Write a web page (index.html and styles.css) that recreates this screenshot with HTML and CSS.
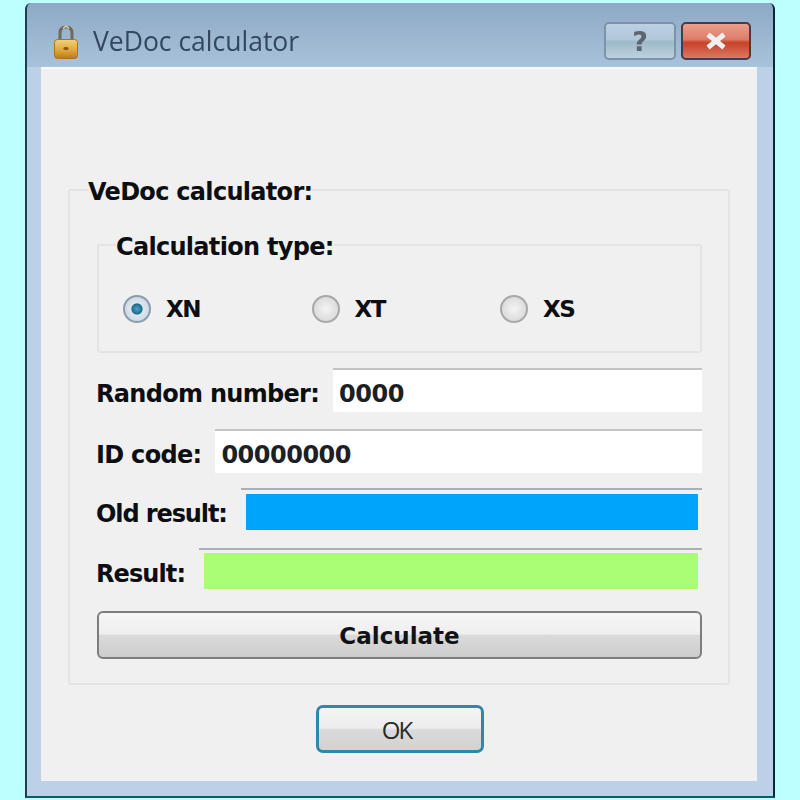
FILE: index.html
```html
<!DOCTYPE html>
<html lang="en">
<head>
    <meta charset="UTF-8">
    <title>VeDoc calculator</title>
    <link rel="stylesheet" href="styles.css">
</head>
<body>

    <div class="window">
        <!-- Title bar -->
        <div class="titlebar">
            <svg class="lock" width="26" height="35" viewBox="0 0 26 35">
                <defs>
                    <linearGradient id="lockBody" x1="0" y1="0" x2="0" y2="1">
                        <stop offset="0" stop-color="#f3d27a"/>
                        <stop offset="0.55" stop-color="#e0a93c"/>
                        <stop offset="1" stop-color="#b67a22"/>
                    </linearGradient>
                </defs>
                <path d="M7 17V9C7 5 9 3 13 3s6 2 6 6v8" fill="none" stroke="#6f6a5c" stroke-width="3"/>
                <path d="M10 4.500 13 2l3 2.500" fill="none" stroke="#d8d4c4" stroke-width="1.500"/>
                <rect x="1.500" y="15.500" width="23" height="19" rx="3" fill="url(#lockBody)" stroke="#a9741f"/>
                <rect x="10.500" y="23" width="5" height="3" rx="1.500" fill="#8a5a18"/>
            </svg>
            <span class="title">VeDoc calculator</span>
            <div class="caption-btns">
                <div class="cap-btn help">?</div>
                <div class="cap-btn close">
                    <svg width="26" height="18" viewBox="0 0 26 18">
                        <path d="M5 2.500 21 15.500M21 2.500 5 15.500" stroke="#eef0f0" stroke-width="5"/>
                    </svg>
                </div>
            </div>
        </div>

        <!-- Dialog body -->
        <div class="client">
            <fieldset class="group outer">
                <legend>VeDoc calculator:</legend>

                <fieldset class="group inner">
                    <legend>Calculation type:</legend>
                    <div class="radios">
                        <div class="radio-item"><span class="radio checked"></span>XN</div>
                        <div class="radio-item"><span class="radio"></span>XT</div>
                        <div class="radio-item"><span class="radio"></span>XS</div>
                    </div>
                </fieldset>

                <div class="row row-first">
                    <label>Random number:</label>
                    <div class="field">0000</div>
                </div>
                <div class="row">
                    <label>ID code:</label>
                    <div class="field">00000000</div>
                </div>
                <div class="row row-old">
                    <label>Old result:</label>
                    <div class="field-out"><div class="fill blue"></div></div>
                </div>
                <div class="row row-res">
                    <label>Result:</label>
                    <div class="field-out"><div class="fill green"></div></div>
                </div>

                <button class="calc">Calculate</button>
            </fieldset>

            <div class="ok-row">
                <button class="ok">OK</button>
            </div>
        </div>
    </div>

</body>
</html>
```

FILE: styles.css
```css
* {
    box-sizing: border-box;
}
body {
    margin: 0;
    width: 800px;
    height: 800px;
    overflow: hidden;
    background-color: #bdffff;
    font-family: 'DejaVu Sans', sans-serif;
    padding: 3px 0 0 25px;
}
.window {
    width: 750px;
    height: 795px;
    padding: 0 16px 15px 14px;
    background: linear-gradient(to bottom, #8ea9c4 0, #a9c2dc 64px, #bcd1e8 64px);
    border-right: 2px solid #06283a;
    border-left: 2px solid #1e3e4e;
    border-bottom: 2px solid #0b5a68;
    border-radius: 6px 6px 0 0;
    display: flex;
    flex-direction: column;
    filter: blur(0.6px);
}
.titlebar {
    height: 64px;
    flex: none;
    display: flex;
    align-items: center;
    padding: 12px 6px 0 12px;
}
.lock {
    margin-right: 14px;
    flex: none;
}
.title {
    font-family: 'Open Sans', sans-serif;
    font-size: 26.500px;
    color: #33475e;
}
.caption-btns {
    margin-left: auto;
    display: flex;
    gap: 5px;
}
.cap-btn {
    height: 38px;
    border-radius: 5px;
    display: flex;
    align-items: center;
    justify-content: center;
}
.help {
    width: 72px;
    border: 2px solid #7d93a8;
    background: linear-gradient(to bottom, #bcd0e2 0, #b0c7da 46%, #9db8c8 52%, #bdd2e0 100%);
    color: #5d6670;
    font-weight: bold;
    font-size: 27px;
}
.close {
    width: 70px;
    border: 2px solid #4a3a45;
    background: linear-gradient(to bottom, #e9a08c 0, #dd7c68 45%, #c8402a 55%, #dc7a5e 100%);
}
.client {
    flex: 1;
    background-color: #f0f0f0;
    border-top: 2px solid #f6f9fb;
    padding: 104px 27px 0 27px;
    display: flex;
    flex-direction: column;
}
.group {
    border: 2px solid #e4e4e4;
    border-radius: 3px;
    margin: 0;
    min-width: 0;
}
.group legend {
    font-weight: bold;
    font-size: 24px;
    color: #0c0e12;
    padding: 4px 0 0 0;
    line-height: 30px;
    letter-spacing: -0.7px;
}
.outer {
    height: 512px;
    padding: 0 26px 0 27px;
}
.outer > legend {
    margin-left: -9px;
}
.inner {
    height: 125px;
    padding: 0;
    margin-top: 21px;
}
.inner > legend {
    margin-left: 17px;
}
.radios {
    display: flex;
    padding: 33px 0 0 24px;
}
.radio-item {
    width: 188.500px;
    display: flex;
    align-items: center;
    font-weight: bold;
    font-size: 23px;
    letter-spacing: -1.500px;
    color: #0c0e12;
    gap: 15px;
}
.radio {
    width: 28px;
    height: 28px;
    border-radius: 50%;
    border: 2px solid #a8a8a8;
    background: radial-gradient(circle, #f4f4f4 0, #dcdcdc 70%, #c8c8c8 100%);
    flex: none;
}
.radio.checked {
    border-color: #8a9cb0;
    background: radial-gradient(circle, #4fa5bd 0, #1f6a92 30%, #dfe6ee 36%, #c6cfd8 100%);
}
.row {
    display: flex;
    align-items: center;
    height: 44px;
    margin-top: 17px;
    gap: 14px;
}
.row-first {
    margin-top: 15px;
}
.row-old {
    margin-top: 15px;
}
.row-res {
    margin-top: 16px;
}
.row label {
    font-weight: bold;
    font-size: 24px;
    color: #0c0e12;
    letter-spacing: -0.7px;
    white-space: nowrap;
    padding-top: 8px;
    margin-left: -1px;
}
.row-old label {
    letter-spacing: -1.100px;
}
.row-res label {
    letter-spacing: -0.900px;
}
.field {
    flex: 1;
    height: 44px;
    background-color: #fff;
    border-top: 2px solid #c4c4c4;
    font-weight: bold;
    font-size: 24px;
    letter-spacing: -0.5px;
    color: #1c1f24;
    padding: 6px 0 0 6px;
    display: flex;
    align-items: center;
}
.field-out {
    flex: 1;
    height: 44px;
    padding: 3px 4px 3px 5px;
    border-top: 2px solid #a9b0b6;
}
.row-old .field-out {
    padding-top: 4px;
    padding-bottom: 2px;
}
.fill {
    height: 100%;
}
.fill.blue {
    background-color: #00a5fb;
}
.fill.green {
    background-color: #a8fe75;
}
.calc {
    display: block;
    width: 100%;
    height: 48px;
    margin-top: 19px;
    padding-top: 3px;
    border: 2px solid #7d7d7d;
    border-radius: 6px;
    background: linear-gradient(to bottom, #f5f5f5 0, #efefef 48%, #dadada 50%, #cdcdcd 100%);
    font-family: 'DejaVu Sans', sans-serif;
    font-weight: bold;
    font-size: 23px;
    color: #101216;
}
.ok-row {
    display: flex;
    justify-content: center;
    margin-top: 20px;
    padding-left: 2px;
}
.ok {
    width: 168px;
    height: 48px;
    padding: 0 7px 0 0;
    border: 3px solid #2f87ac;
    border-radius: 7px;
    background: linear-gradient(to bottom, #f4f4f4 0, #ececec 48%, #dadada 52%, #d2d2d2 100%);
    font-family: 'Open Sans', sans-serif;
    font-size: 24px;
    color: #2a2a2a;
    letter-spacing: -2px;
}
```
